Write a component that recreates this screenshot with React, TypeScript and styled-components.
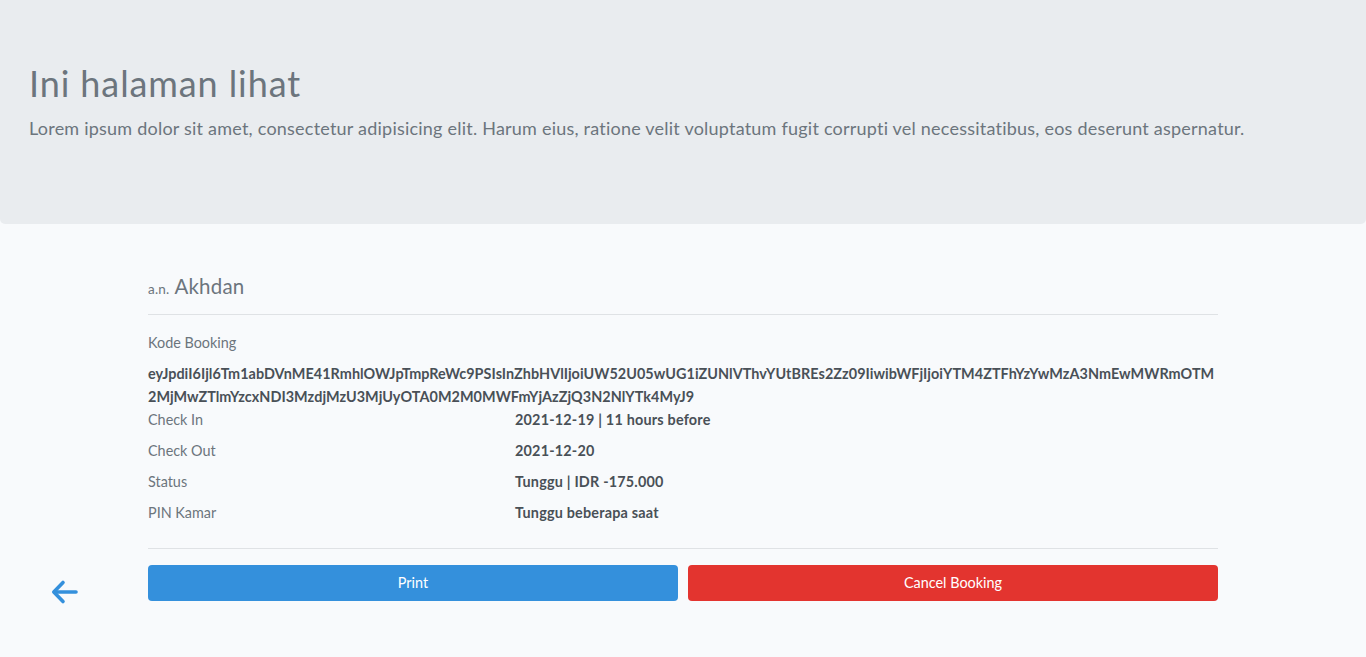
import React from "react";
import styled, { createGlobalStyle } from "styled-components";

const FONT = `"Lato", "Noto Sans", sans-serif`;

const Global = createGlobalStyle`
  * { box-sizing: border-box; }
  html, body { margin: 0; padding: 0; }
  body {
    background: #f8fafc;
    font-family: ${FONT};
    font-size: 14.4px;
    line-height: 1.6;
    color: #212529;
  }
`;

const Jumbotron = styled.header`
  background: #e9ecef;
  border-radius: 0 0 5px 5px;
  padding: 62px 29px 66px;
`;

const Title = styled.h1`
  margin: 0 0 9px;
  font-size: 36px;
  font-weight: 400;
  line-height: 1.2;
  letter-spacing: 0.9px;
  color: #6c757d;
`;

const Lead = styled.p`
  margin: 0 0 15px;
  font-size: 18px;
  font-weight: 400;
  line-height: 1.6;
  letter-spacing: 0.22px;
  color: #6c757d;
`;

const Main = styled.main`
  display: flex;
  padding: 50px 0 0;
`;

const Side = styled.div`
  width: 148px;
  flex: none;
  display: flex;
  align-items: flex-end;
  padding: 0 0 14px 51px;
`;

const BackLink = styled.a`
  display: flex;
  color: #3490dc;
  cursor: pointer;
`;

const Card = styled.section`
  width: 1070px;
  flex: none;
  padding-bottom: 18px;
`;

const Holder = styled.div`
  height: 25px;
  display: flex;
  align-items: baseline;
  color: #6c757d;
  font-size: 20.5px;
  line-height: 25px;
  letter-spacing: 0.2px;
`;

const Small = styled.small`
  font-size: 13.5px;
  margin-right: 5px;
`;

const Rule = styled.hr<{ $top: number; $bottom: number }>`
  border: 0;
  border-top: 1px solid #dfe2e5;
  margin: ${(p) => p.$top}px 0 ${(p) => p.$bottom}px;
`;

const Label = styled.div<{ $gap?: number }>`
  color: #6c757d;
  font-size: 14.4px;
  line-height: 23px;
  margin-bottom: ${(p) => p.$gap ?? 0}px;
`;

const Token = styled.div`
  font-weight: 700;
  color: #495057;
  font-size: 14.4px;
  line-height: 23px;
  letter-spacing: 0.05px;
  word-break: break-all;
`;

const InfoRow = styled.div`
  display: grid;
  grid-template-columns: 367px 1fr;
  line-height: 23px;
  margin-bottom: 8px;
  &:last-child { margin-bottom: 0; }
`;

const Value = styled.div`
  font-weight: 700;
  color: #495057;
  letter-spacing: 0.2px;
`;

const Actions = styled.div`
  display: grid;
  grid-template-columns: 1fr 1fr;
  gap: 10px;
`;

const Button = styled.button<{ $tone: "primary" | "danger" }>`
  height: 36px;
  border: 0;
  border-radius: 4px;
  font-family: ${FONT};
  font-size: 14.4px;
  color: #fff;
  background: ${(p) => (p.$tone === "primary" ? "#3490dc" : "#e3342f")};
  cursor: pointer;
`;

const rows: [string, string][] = [
  ["Check In", "2021-12-19 | 11 hours before"],
  ["Check Out", "2021-12-20"],
  ["Status", "Tunggu | IDR -175.000"],
  ["PIN Kamar", "Tunggu beberapa saat"],
];

export default function App() {
  return (
    <>
      <Global />
      <Jumbotron>
        <Title>Ini halaman lihat</Title>
        <Lead>
          Lorem ipsum dolor sit amet, consectetur adipisicing elit. Harum eius, ratione velit voluptatum
          fugit corrupti vel necessitatibus, eos deserunt aspernatur.
        </Lead>
      </Jumbotron>
      <Main>
        <Side>
          <BackLink aria-label="back">
            <svg width="28" height="26" viewBox="0 0 28 26" fill="none" stroke="currentColor" strokeWidth="3.6" strokeLinecap="round" strokeLinejoin="round">
              <path d="M25 13H3.5" />
              <path d="M12 3.5 2.8 13 12 22.5" />
            </svg>
          </BackLink>
        </Side>
        <Card>
          <Holder>
            <Small>a.n.</Small>Akhdan
          </Holder>
          <Rule $top={15} $bottom={16} />
          <Label $gap={8}>Kode Booking</Label>
          <Token>
            eyJpdiI6Ijl6Tm1abDVnME41RmhlOWJpTmpReWc9PSIsInZhbHVlIjoiUW52U05wUG1iZUNlVThvYUtBREs2Zz09IiwibWFjIjoiYTM4ZTFhYzYwMzA3NmEwMWRmOTM2MjMwZTlmYzcxNDI3MzdjMzU3MjUyOTA0M2M0MWFmYjAzZjQ3N2NlYTk4MyJ9
          </Token>
          {rows.map(([k, v]) => (
            <InfoRow key={k}>
              <Label>{k}</Label>
              <Value>{v}</Value>
            </InfoRow>
          ))}
          <Rule $top={24} $bottom={16} />
          <Actions>
            <Button $tone="primary">Print</Button>
            <Button $tone="danger">Cancel Booking</Button>
          </Actions>
        </Card>
      </Main>
    </>
  );
}
